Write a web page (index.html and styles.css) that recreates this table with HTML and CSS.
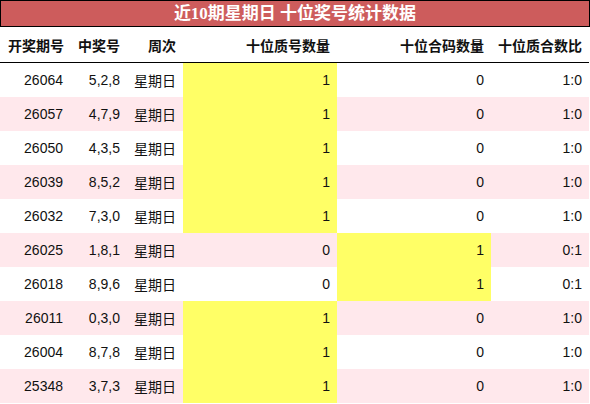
FILE: index.html
```html
<!DOCTYPE html>
<html>
<head>
<meta charset="utf-8">
<link rel="stylesheet" href="styles.css">
</head>
<body>
<div class="title">近10期星期日 十位奖号统计数据</div>
<table class="stats">
<colgroup>
<col class="c1"><col class="c2"><col class="c3"><col class="c4"><col class="c5"><col class="c6">
</colgroup>
<thead>
<tr><th>开奖期号</th><th>中奖号</th><th>周次</th><th>十位质号数量</th><th>十位合码数量</th><th>十位质合数比</th></tr>
</thead>
<tbody>
<tr><td>26064</td><td>5,2,8</td><td>星期日</td><td class="hl">1</td><td>0</td><td>1:0</td></tr>
<tr class="alt"><td>26057</td><td>4,7,9</td><td>星期日</td><td class="hl">1</td><td>0</td><td>1:0</td></tr>
<tr><td>26050</td><td>4,3,5</td><td>星期日</td><td class="hl">1</td><td>0</td><td>1:0</td></tr>
<tr class="alt"><td>26039</td><td>8,5,2</td><td>星期日</td><td class="hl">1</td><td>0</td><td>1:0</td></tr>
<tr><td>26032</td><td>7,3,0</td><td>星期日</td><td class="hl">1</td><td>0</td><td>1:0</td></tr>
<tr class="alt"><td>26025</td><td>1,8,1</td><td>星期日</td><td>0</td><td class="hl">1</td><td>0:1</td></tr>
<tr><td>26018</td><td>8,9,6</td><td>星期日</td><td>0</td><td class="hl">1</td><td>0:1</td></tr>
<tr class="alt"><td>26011</td><td>0,3,0</td><td>星期日</td><td class="hl">1</td><td>0</td><td>1:0</td></tr>
<tr><td>26004</td><td>8,7,8</td><td>星期日</td><td class="hl">1</td><td>0</td><td>1:0</td></tr>
<tr class="alt"><td>25348</td><td>3,7,3</td><td>星期日</td><td class="hl">1</td><td>0</td><td>1:0</td></tr>
</tbody>
</table>
</body>
</html>
```
FILE: styles.css
```css
html, body {
  margin: 0;
  padding: 0;
  background: #ffffff;
}
body {
  font-family: "Liberation Sans", "Noto Sans CJK SC", sans-serif;
  font-size: 14px;
  color: #111111;
}
.title {
  box-sizing: border-box;
  width: 590px;
  height: 27px;
  border: 1px solid #000000;
  background: #cd5c5c;
  color: #ffffff;
  font-family: "Liberation Serif", "Noto Sans CJK SC", serif;
  font-weight: bold;
  font-size: 17px;
  line-height: 25px;
  text-align: center;
}
.stats {
  width: 589px;
  border-collapse: collapse;
  border-spacing: 0;
  table-layout: fixed;
}
.c1 { width: 70px; }
.c2 { width: 57px; }
.c3 { width: 56px; }
.c4 { width: 154px; }
.c5 { width: 154px; }
.c6 { width: 98px; }
.stats th {
  height: 35px;
  padding: 0 7px;
  text-align: right;
  font-weight: bold;
  font-size: 14px;
  border-bottom: 1px solid #000000;
  white-space: nowrap;
}
.stats th:first-child {
  padding-right: 6px;
}
.stats td {
  height: 34px;
  padding: 0 7px;
  text-align: right;
  white-space: nowrap;
}
.stats tr.alt td {
  background: #ffe8ec;
}
.stats td.hl,
.stats tr.alt td.hl {
  background: #ffff66;
}
```
